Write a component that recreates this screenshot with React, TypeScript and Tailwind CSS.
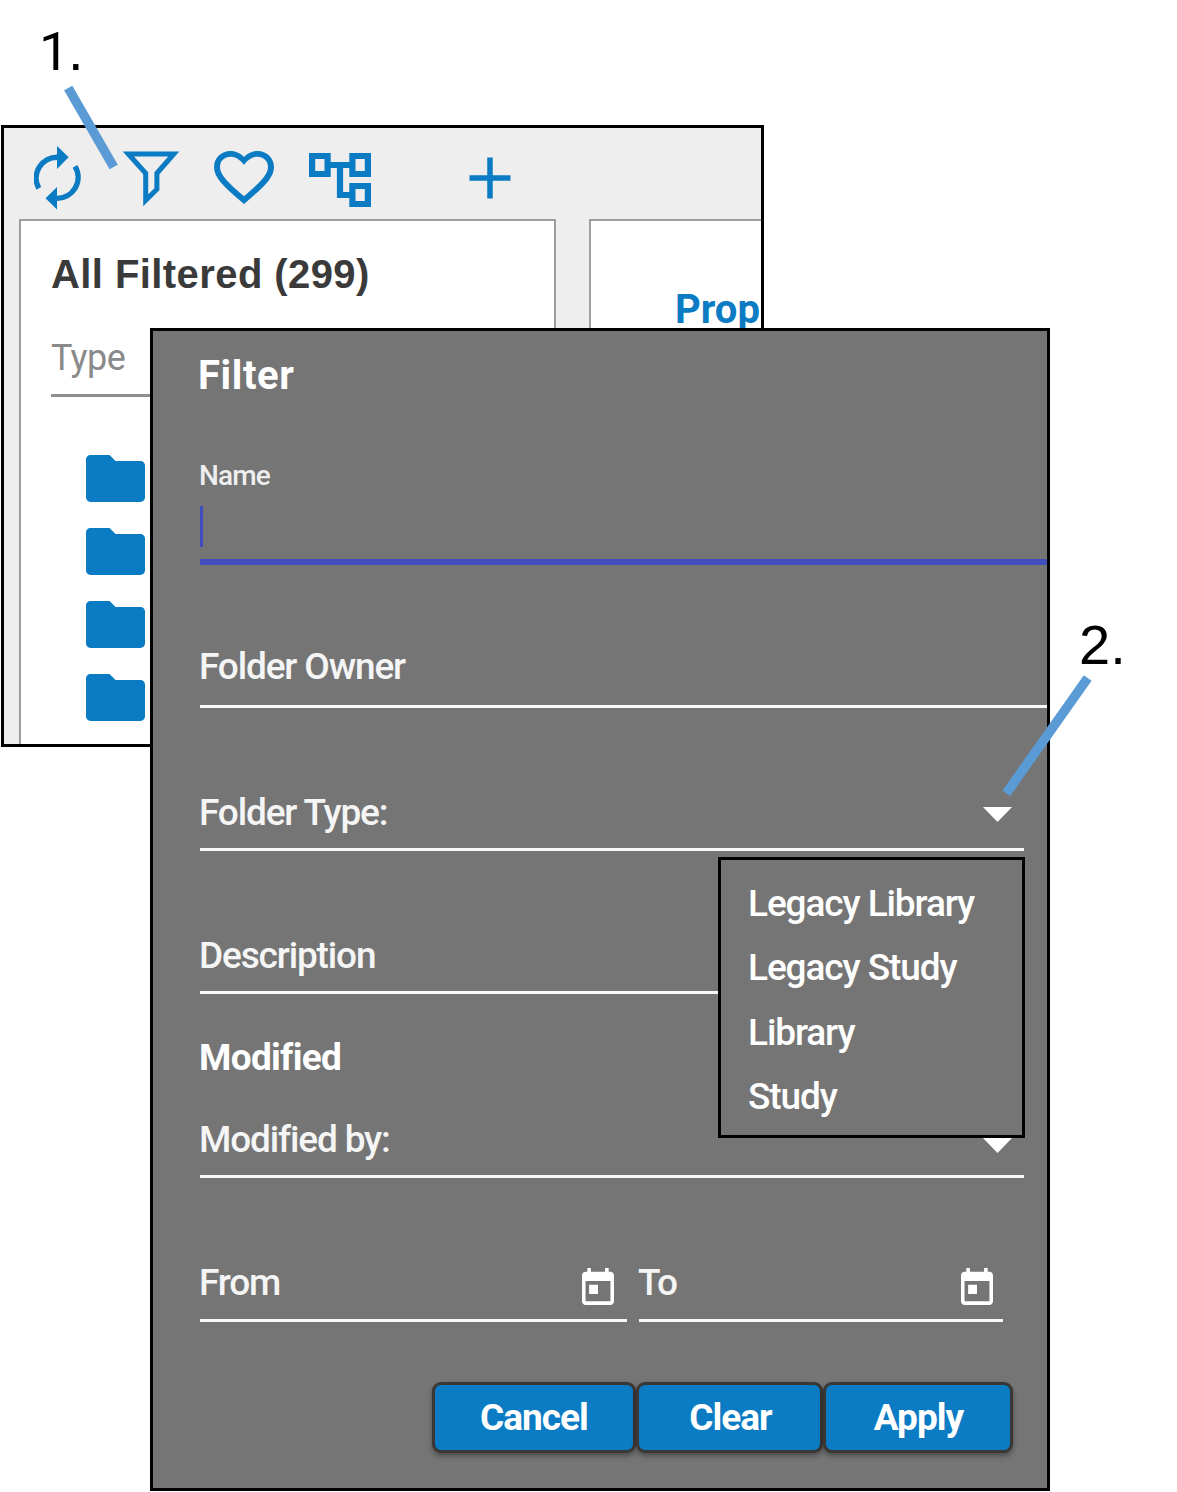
import type { ReactNode } from "react";
import clsx from "clsx";

const folderTypes = ["Legacy Library", "Legacy Study", "Library", "Study"];

const actions = [
    { name: "Cancel", className: "w-[204px]" },
    { name: "Clear", className: "w-[187px] pl-[2px]" },
    { name: "Apply", className: "w-[190px] pl-[1px]" },
];

const RefreshIcon = () => (
    <svg
        className="h-16 w-12 flex-none"
        viewBox="34 146 48 64"
        fill="none"
        stroke="#0b7bc4"
        strokeWidth="5.4"
    >
        <path d="M38.8 188.4A21 21 0 0 1 58 157.2" />
        <path d="M75 166.4A21 21 0 0 1 56.5 198.4" />
        <path
            d="M57 146 68.7 157.2 57 169ZM57 187 45.5 198.3 57 209.5Z"
            fill="#0b7bc4"
            stroke="none"
        />
    </svg>
);

const FunnelIcon = () => (
    <svg
        className="ml-[38px] h-16 w-[62px] flex-none"
        viewBox="120 146 62 64"
        fill="none"
        stroke="#0b7bc4"
        strokeWidth="5"
        strokeMiterlimit="10"
    >
        <path d="M128.3 154H173.8L156.9 173.3V189.2L145.7 200.2V173.3Z" />
    </svg>
);

const HeartIcon = () => (
    <svg
        className="-mt-px ml-8 h-[53px] w-[60px] flex-none"
        viewBox="2 3 20 18.35"
        preserveAspectRatio="none"
        fill="#0b7bc4"
    >
        <path d="M16.5 3c-1.74 0-3.41.81-4.5 2.09C10.91 3.81 9.24 3 7.5 3 4.42 3 2 5.42 2 8.5c0 3.78 3.4 6.86 8.55 11.54L12 21.35l1.45-1.32C18.6 15.36 22 12.28 22 8.5 22 5.42 19.58 3 16.5 3zm-4.4 15.55l-.1.1-.1-.1C7.14 14.24 4 11.39 4 8.5 4 6.5 5.5 5 7.5 5c1.54 0 2.9.8 4.5 2.75C13.6 5.8 14.96 5 16.5 5c2 0 3.5 1.5 3.5 3.5 0 2.89-3.14 5.74-7.9 10.05z" />
    </svg>
);

const TreeIcon = () => (
    <svg
        className="mt-[3px] ml-[35px] h-[54px] w-[62px] flex-none"
        viewBox="2 3 20 18"
        preserveAspectRatio="none"
        fill="#0b7bc4"
    >
        <path
            fillRule="evenodd"
            d="M22 11V3h-7v3H9V3H2v8h7V8h2v10h4v3h7v-8h-7v3h-2V8h2v3h7zM7 9H4V5h3v4zm10 6h3v4h-3v-4zm0-10h3v4h-3V5z"
        />
    </svg>
);

const PlusIcon = () => (
    <svg
        className="ml-[98px] h-[42px] w-[42px] flex-none"
        viewBox="0 0 42 42"
        stroke="#0b7bc4"
        strokeWidth="5.5"
    >
        <path d="M0.5 21H41.5M21 0.5V41.5" />
    </svg>
);

const FolderIcon = () => (
    <svg
        className="h-[47px] w-[59px]"
        viewBox="2 4 20 16"
        preserveAspectRatio="none"
        fill="#0b7bc4"
    >
        <path d="M10 4H3.6C2.7 4 2 4.7 2 5.6v12.8c0 .9.7 1.6 1.6 1.6h16.8c.9 0 1.6-.7 1.6-1.6V7.6c0-.9-.7-1.6-1.6-1.6H12L10 4z" />
    </svg>
);

const CalendarIcon = () => (
    <svg
        className="mt-[5px] h-[37px] w-8 flex-none"
        viewBox="3 1 18 20"
        preserveAspectRatio="none"
        fill="#ffffff"
    >
        <path d="M19 3h-1V1h-2v2H8V1H6v2H5c-1.11 0-1.99.9-1.99 2L3 19c0 1.1.89 2 2 2h14c1.1 0 2-.9 2-2V5c0-1.1-.9-2-2-2zm0 16H5V8h14v11zM7 10h5v5H7z" />
    </svg>
);

const CaretIcon = ({ className }: { className: string }) => (
    <svg
        className={clsx("mr-3 h-[15px] w-[29px] flex-none", className)}
        viewBox="0 0 29 15"
        fill="#ffffff"
    >
        <path d="M0 0H29L14.5 15Z" />
    </svg>
);

const Field = ({
    label,
    className,
    children,
}: {
    label: string;
    className?: string;
    children?: ReactNode;
}) => (
    <div
        className={clsx(
            "flex h-[58px] items-start justify-between border-b-3 border-[#f8f8f8]",
            className
        )}
    >
        <span className="-ml-px text-[37px] leading-10 font-medium tracking-[-1.15px] whitespace-nowrap text-[#f5f5f5]">
            {label}
        </span>
        {children}
    </div>
);

const Explorer = () => (
    <div className="ml-px h-[622px] w-[763px] overflow-hidden border-3 border-black bg-[#eeeeee]">
        <div className="flex h-[91px] items-center pt-[9px] pl-[30px]">
            <RefreshIcon />
            <FunnelIcon />
            <HeartIcon />
            <TreeIcon />
            <PlusIcon />
        </div>
        <div className="flex h-[560px] gap-[33px] pl-[15px]">
            <div className="w-[537px] flex-none border-2 border-[#9e9e9e] bg-white pt-[31px] pl-[30px]">
                <h1 className="font-['Liberation_Sans',sans-serif] text-[40px] leading-[44px] font-bold tracking-[0.42px] text-[#3a3a3a]">
                    All Filtered (299)
                </h1>
                <div className="mt-[42px] h-[59px] w-[460px] border-b-3 border-[#8e8e8e] text-[36px] leading-10 tracking-[-0.6px] text-[#8a8a8a]">
                    Type
                </div>
                <div className="mt-[58px] ml-[35px] flex flex-col gap-[26px]">
                    {[0, 1, 2, 3].map((row) => (
                        <FolderIcon key={row} />
                    ))}
                </div>
            </div>
            <div className="w-[400px] flex-none border-2 border-[#9e9e9e] bg-white pt-[67px] pl-[84px] text-[40px] leading-[44px] font-bold text-[#0b7bc4]">
                Prop
            </div>
        </div>
    </div>
);

const FilterDialog = () => (
    <div className="absolute top-[328px] left-[150px] h-[1163px] w-[900px] border-3 border-black bg-[#757575] pt-[25px] pl-[47px] text-white">
        <h2 className="-ml-[2px] text-[40px] leading-10 font-bold tracking-[0.6px]">
            Filter
        </h2>
        <div className="mt-[65px] h-[104px] border-b-[6px] border-[#3f4dbd]">
            <div className="-ml-px text-[28px] leading-[30px] font-medium tracking-[-0.9px] text-[#eeeeee]">
                Name
            </div>
            <div className="mt-[15px] h-[41px] w-[3px] bg-[#3f4dbd]" />
        </div>
        <Field label="Folder Owner" className="mt-[82px] h-[61px]" />
        <Field label="Folder Type:" className="mt-[85px] w-[824px]">
            <CaretIcon className="mt-[14px]" />
        </Field>
        <Field label="Description" className="mt-[85px] w-[824px]" />
        <h3 className="mt-11 -ml-px text-[37px] leading-10 font-bold tracking-[-0.7px]">
            Modified
        </h3>
        <Field label="Modified by:" className="mt-[42px] w-[824px]">
            <CaretIcon className="mt-[18px]" />
        </Field>
        <div className="mt-[85px] flex gap-3">
            <Field label="From" className="h-[59px] w-[427px] pr-[13px]">
                <CalendarIcon />
            </Field>
            <Field label="To" className="h-[59px] w-[364px] pr-[10px]">
                <CalendarIcon />
            </Field>
        </div>
        <div className="mt-[60px] ml-[232px] flex">
            {actions.map((action) => (
                <button
                    key={action.name}
                    className={clsx(
                        "h-[71px] rounded-[9px] border-3 border-[#3a3735] bg-[#0b7bc4] text-[37px] leading-10 font-bold tracking-[-1px] shadow-[0_3px_5px_rgba(0,0,0,0.35)]",
                        action.className
                    )}
                >
                    {action.name}
                </button>
            ))}
        </div>
        <ul className="absolute top-[526px] left-[565px] h-[281px] w-[307px] border-3 border-black bg-[#757575] pt-3 pl-[27px]">
            {folderTypes.map((type) => (
                <li
                    key={type}
                    className="text-[37px] leading-[64.3px] font-medium tracking-[-1.1px]"
                >
                    {type}
                </li>
            ))}
        </ul>
    </div>
);

export default function App() {
    return (
        <div className="relative h-[1492px] w-[1177px] overflow-hidden bg-white pt-[125px] font-['Roboto',sans-serif]">
            <Explorer />
            <FilterDialog />
            <span className="absolute top-[23px] left-[37px] font-['Liberation_Sans',sans-serif] text-[56px] leading-[56px] text-black">
                <span className="inline-block w-[31px] pl-[2px] font-['Roboto',sans-serif] text-[54px] leading-[56px]">
                    1
                </span>
                .
            </span>
            <span className="absolute top-[617px] left-[1079px] font-['Liberation_Sans',sans-serif] text-[56px] leading-[56px] text-black">
                2.
            </span>
            {/* callout leader lines */}
            <svg
                className="pointer-events-none absolute inset-0"
                width="1177"
                height="1492"
                viewBox="0 0 1177 1492"
                stroke="#5b9bd5"
                strokeWidth="9.5"
            >
                <path d="M68.2 88L113.7 167" />
                <path d="M1087.7 678L1006.3 793.3" />
            </svg>
        </div>
    );
}
